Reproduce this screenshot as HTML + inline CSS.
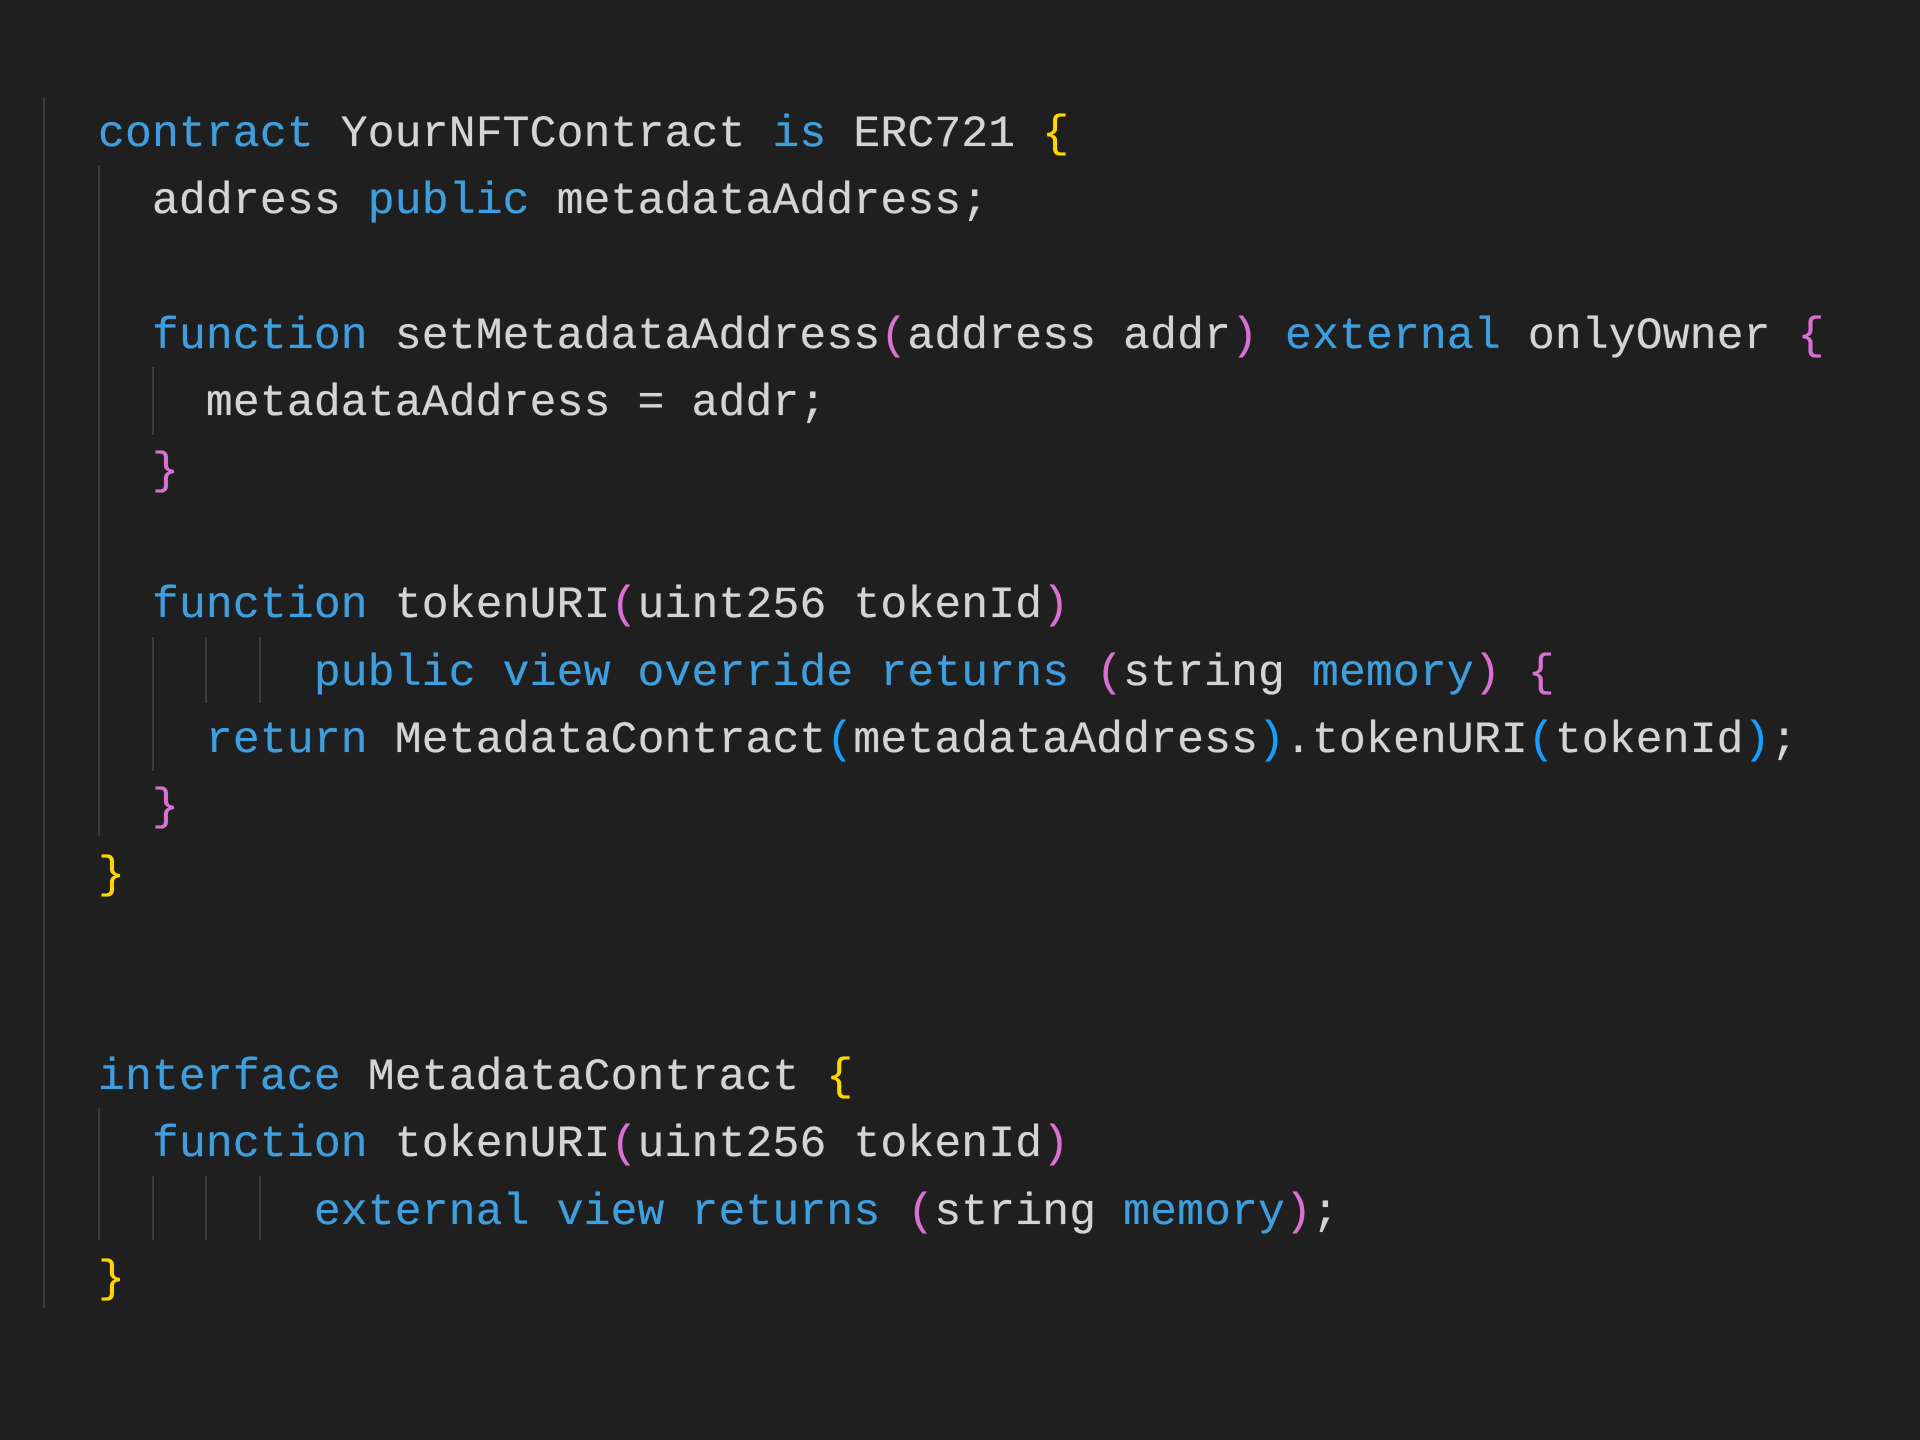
<!DOCTYPE html>
<html><head><meta charset="utf-8"><style>
html,body{margin:0;padding:0;background:#1f1f1f;width:1920px;height:1440px;overflow:hidden}
pre{position:absolute;left:98px;top:102px;margin:0;font-family:"Liberation Mono",monospace;font-size:44.7px;letter-spacing:0.16px;line-height:67.35px;color:#d4d4d4;white-space:pre;text-shadow:0 0 0.6px currentColor}
.k{color:#3f9fde}.y{color:#ffd700}.p{color:#da70d6}.b{color:#179fff}
.g{position:absolute;width:2px;background:#3c3c3c}
</style></head><body>
<div class="g" style="left:43px;top:98px;height:1210px"></div>
<div class="g" style="left:98px;top:165px;height:671px"></div>
<div class="g" style="left:98px;top:1108px;height:132px"></div>
<div class="g" style="left:152px;top:367px;height:68px"></div>
<div class="g" style="left:152px;top:637px;height:134px"></div>
<div class="g" style="left:152px;top:1176px;height:64px"></div>
<div class="g" style="left:205px;top:637px;height:66px"></div>
<div class="g" style="left:259px;top:637px;height:66px"></div>
<div class="g" style="left:205px;top:1176px;height:64px"></div>
<div class="g" style="left:259px;top:1176px;height:64px"></div>
<pre><span class="k">contract</span> YourNFTContract <span class="k">is</span> ERC721 <span class="y">{</span>
  address <span class="k">public</span> metadataAddress;

  <span class="k">function</span> setMetadataAddress<span class="p">(</span>address addr<span class="p">)</span> <span class="k">external</span> onlyOwner <span class="p">{</span>
    metadataAddress = addr;
  <span class="p">}</span>

  <span class="k">function</span> tokenURI<span class="p">(</span>uint256 tokenId<span class="p">)</span>
        <span class="k">public view override returns</span> <span class="p">(</span>string <span class="k">memory</span><span class="p">)</span> <span class="p">{</span>
    <span class="k">return</span> MetadataContract<span class="b">(</span>metadataAddress<span class="b">)</span>.tokenURI<span class="b">(</span>tokenId<span class="b">)</span>;
  <span class="p">}</span>
<span class="y">}</span>


<span class="k">interface</span> MetadataContract <span class="y">{</span>
  <span class="k">function</span> tokenURI<span class="p">(</span>uint256 tokenId<span class="p">)</span>
        <span class="k">external view returns</span> <span class="p">(</span>string <span class="k">memory</span><span class="p">)</span>;
<span class="y">}</span></pre>
</body></html>
